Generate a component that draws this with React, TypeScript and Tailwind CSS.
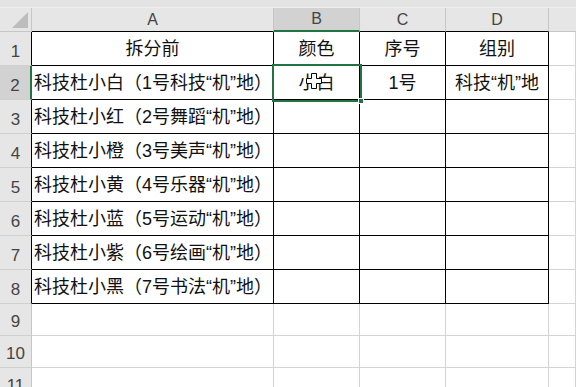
import React from 'react';

const COLS = ['A', 'B', 'C', 'D', 'E'];

const DATA: Record<number, string[]> = {
  1: ['拆分前', '颜色', '序号', '组别'],
  2: ['科技杜小白（1号科技“机”地）', '小白', '1号', '科技“机”地'],
  3: ['科技杜小红（2号舞蹈“机”地）', '', '', ''],
  4: ['科技杜小橙（3号美声“机”地）', '', '', ''],
  5: ['科技杜小黄（4号乐器“机”地）', '', '', ''],
  6: ['科技杜小蓝（5号运动“机”地）', '', '', ''],
  7: ['科技杜小紫（6号绘画“机”地）', '', '', ''],
  8: ['科技杜小黑（7号书法“机”地）', '', '', ''],
};

const ROWS = [1, 2, 3, 4, 5, 6, 7, 8, 9, 10, 11];

const ColHeader: React.FC<{ col: string }> = ({ col }) => {
  let cls = 'bg-[#e6e6e6] border-r border-r-[#c6c6c6] border-b border-b-black';
  if (col === 'B') cls = 'bg-[#d2d2d2] border-r border-r-[#c6c6c6] border-b-2 border-b-[#217346]';
  if (col === 'E') cls = 'bg-[#e6e6e6] border-b border-b-[#c6c6c6]';
  return (
    <div className={`${cls} flex items-end justify-center pb-[3px] text-[16px] leading-none text-[#444]`}>
      {col === 'E' ? '' : col}
    </div>
  );
};

const RowHeader: React.FC<{ row: number }> = ({ row }) => {
  let cls = 'bg-[#e6e6e6] border-b border-b-[#d0d0d0] border-r border-r-black';
  if (row === 2) cls = 'bg-[#d2d2d2] border-b border-b-[#d0d0d0] border-r-2 border-r-[#217346]';
  if (row > 8) cls = 'bg-[#e6e6e6] border-b border-b-[#d0d0d0] border-r border-r-[#c6c6c6]';
  return (
    <div className={`${cls} flex items-end justify-center pb-[5px] text-[17px] leading-none text-[#444]`}>
      {row}
    </div>
  );
};

const Cell: React.FC<{ row: number; colIndex: number }> = ({ row, colIndex }) => {
  const inTable = row <= 8 && colIndex < 4;
  const text = DATA[row]?.[colIndex] ?? '';
  const leftAligned = colIndex === 0 && row > 1;
  const border = inTable ? 'border-r border-b border-black' : 'border-r border-b border-[#d4d4d4]';
  return (
    <div
      className={`${border} bg-white flex items-center text-[18px] leading-none text-[#111] whitespace-nowrap overflow-hidden ${
        leftAligned ? 'justify-start pl-[2px]' : 'justify-center'
      }`}
    >
      {text}
    </div>
  );
};

const MoveCursor = () => (
  <svg width="16" height="16" viewBox="0 0 16 16" className="absolute left-[306px] top-[73px]">
    <path
      d="M5.5 0.5h5v5h5v5h-5v5h-5v-5h-5v-5h5z"
      fill="#fff"
      stroke="#000"
      strokeWidth="1"
    />
  </svg>
);

export default function App() {
  return (
    <div className="relative w-[576px] h-[387px] overflow-hidden bg-white font-['Liberation_Sans','Noto_Sans_CJK_SC',sans-serif]">
      <div className="h-[8px] bg-[#e3e3e3] border-b border-[#efefef]" />
      <div className="grid grid-cols-[32px_242px_86px_86px_103px_1fr] grid-rows-[24px_repeat(8,34px)_repeat(3,32px)]">
        <div className="relative bg-[#e6e6e6] border-r border-b border-[#c6c6c6]">
          <div className="absolute right-[3px] bottom-[3px] w-0 h-0 border-l-[16px] border-l-transparent border-b-[16px] border-b-[#bdbdbd]" />
        </div>
        {COLS.map(c => (
          <ColHeader key={c} col={c} />
        ))}
        {ROWS.map(r => (
          <React.Fragment key={r}>
            <RowHeader row={r} />
            {COLS.map((c, i) => (
              <Cell key={c} row={r} colIndex={i} />
            ))}
          </React.Fragment>
        ))}
      </div>

      {/* active cell B2 */}
      <div className="absolute left-[272px] top-[64px] w-[90px] h-[38px] border-2 border-[#217346]" />
      <div className="absolute left-[358px] top-[98px] w-[6px] h-[6px] bg-[#217346] border border-white" />
      <MoveCursor />
    </div>
  );
}
